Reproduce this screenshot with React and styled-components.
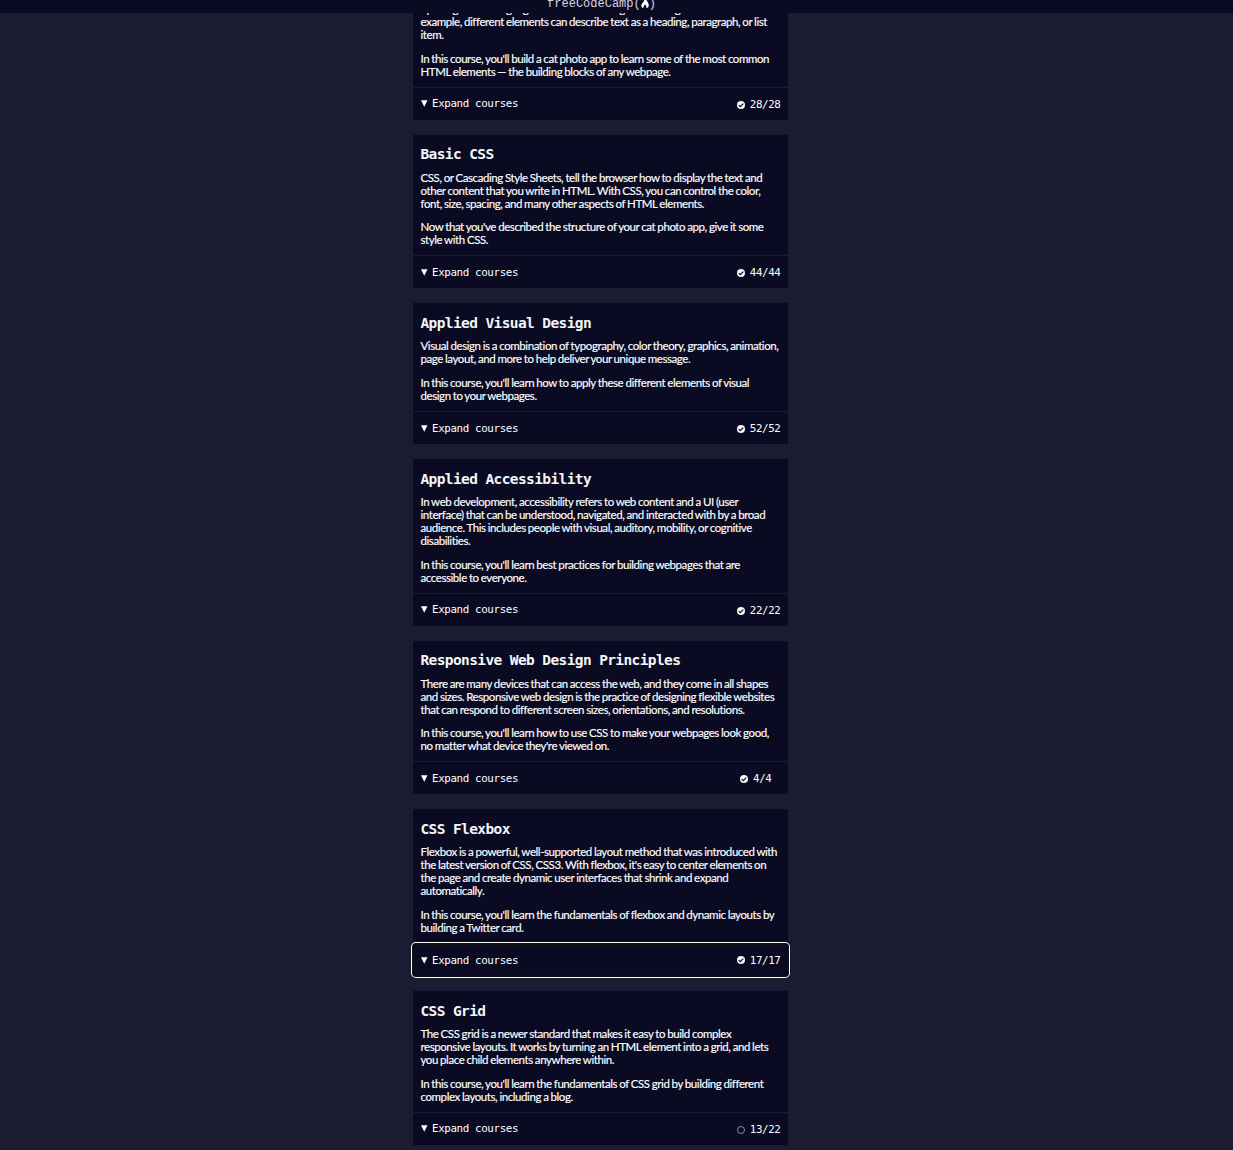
import React from "react";
import styled, { createGlobalStyle } from "styled-components";

const GlobalStyle = createGlobalStyle`
  * { box-sizing: border-box; }
  html, body { margin: 0; background: #1b1b32; }
  body { height: 1150px; overflow: hidden; }
`;

const mono = `"DejaVu Sans Mono", "Liberation Mono", monospace`;

const Header = styled.header`
  position: fixed;
  inset: 0 0 auto 0;
  z-index: 2;
  height: 13px;
  padding-right: 30px;
  display: flex;
  justify-content: center;
  align-items: flex-end;
  overflow: hidden;
  background: #0a0a23;
`;

const Logo = styled.div`
  flex: none;
  display: flex;
  align-items: center;
  height: 18px;
  font: 12px/18px "Liberation Mono", monospace;
  color: #d6d6e4;
`;

const Flame = styled.svg`
  display: block;
  width: 8px;
  height: 10px;
  margin-bottom: 3px;
`;

const Map = styled.main`
  width: 375px;
  margin-left: 413px;
  display: flex;
  flex-direction: column;
  gap: 15px;
`;

const Card = styled.section`
  background: #0a0a23;
  color: #f5f6f7;
`;

const Intro = styled.div`
  padding: ${(p) => (p.$cut ? "2px" : p.$tight ? "10px" : "11px")} 7.5px 9px;
`;

const Title = styled.h3`
  margin: 0 0 ${(p) => (p.$tight ? "8px" : "7px")};
  font: bold 14.5px/18px ${mono};
  letter-spacing: -0.61px;
  white-space: nowrap;
`;

const Text = styled.p`
  margin: 0;
  font: 11.5px/13px Lato, sans-serif;
  letter-spacing: -0.42px;
  word-spacing: -0.4px;
  color: #ffffff;
  -webkit-text-stroke: 0.15px #ffffff;
  white-space: nowrap;
  &:not(:first-of-type) { margin-top: ${(p) => (p.$tight ? "10px" : "11px")}; }
`;

const Line = styled.span`
  display: block;
`;

const Toggle = styled.button`
  display: flex;
  align-items: center;
  width: 100%;
  height: 33px;
  padding: 2px 7.5px 0 8px;
  border: 0;
  border-top: 1px solid #1b1b32;
  background: #0a0a23;
  color: #ffffff;
  font: 10.8px/14px ${mono};
  letter-spacing: -0.35px;
  outline: none;
  ${(p) =>
    p.$focused &&
    `height: 32px;
     margin-top: 1px;
     padding-top: 0;
     border-top-color: #101010;
     box-shadow: inset 0 0 0 1px #101010, 0 0 0 1px #101010, 0 0 0 2px #ffffff;
     border-radius: 3px;`}
`;

const Label = styled.span`
  padding-bottom: ${(p) => (p.$raised ? "2px" : "0")};
  display: flex;
  align-items: center;
  gap: 4.5px;
`;

const Caret = styled.svg`
  width: 6.5px;
  height: 7px;
  margin-bottom: 1px;
`;

const Count = styled.span`
  display: flex;
  align-items: center;
  gap: 5px;
  margin-left: auto;
  padding-right: ${(p) => (p.$short ? "9px" : "0")};
`;

const Status = styled.svg`
  display: block;
  width: 8px;
  height: 8px;
  margin-bottom: 1px;
`;

const StatusIcon = ({ done }) => (
  <Status viewBox="0 0 16 16">
    {done ? (
      <>
        <circle cx="8" cy="8" r="8" fill="#f5f6f7" />
        <path d="M3.5 8.200l3 3 6-6" fill="none" stroke="#0a0a23" strokeWidth="2.400" />
      </>
    ) : (
      <circle cx="8" cy="8" r="7" fill="none" stroke="#a5a5b5" strokeWidth="1.7" />
    )}
  </Status>
);

const courses = [
  {
    paragraphs: [
      ["opening and closing tags that surround and give meaning to content. For", "example, different elements can describe text as a heading, paragraph, or list", "item."],
      ["In this course, you'll build a cat photo app to learn some of the most common", "HTML elements — the building blocks of any webpage."],
    ],
    count: "28/28", done: true, raised: true,
  },
  {
    title: "Basic CSS",
    paragraphs: [
      ["CSS, or Cascading Style Sheets, tell the browser how to display the text and", "other content that you write in HTML. With CSS, you can control the color,", "font, size, spacing, and many other aspects of HTML elements."],
      ["Now that you've described the structure of your cat photo app, give it some", "style with CSS."],
    ],
    count: "44/44", done: true, tight: true,
  },
  {
    title: "Applied Visual Design",
    paragraphs: [
      ["Visual design is a combination of typography, color theory, graphics, animation,", "page layout, and more to help deliver your unique message."],
      ["In this course, you'll learn how to apply these different elements of visual", "design to your webpages."],
    ],
    count: "52/52", done: true,
  },
  {
    title: "Applied Accessibility",
    paragraphs: [
      ["In web development, accessibility refers to web content and a UI (user", "interface) that can be understood, navigated, and interacted with by a broad", "audience. This includes people with visual, auditory, mobility, or cognitive", "disabilities."],
      ["In this course, you'll learn best practices for building webpages that are", "accessible to everyone."],
    ],
    count: "22/22", done: true, raised: true,
  },
  {
    title: "Responsive Web Design Principles",
    paragraphs: [
      ["There are many devices that can access the web, and they come in all shapes", "and sizes. Responsive web design is the practice of designing flexible websites", "that can respond to different screen sizes, orientations, and resolutions."],
      ["In this course, you'll learn how to use CSS to make your webpages look good,", "no matter what device they're viewed on."],
    ],
    count: "4/4", done: true, tight: true,
  },
  {
    title: "CSS Flexbox",
    paragraphs: [
      ["Flexbox is a powerful, well-supported layout method that was introduced with", "the latest version of CSS, CSS3. With flexbox, it's easy to center elements on", "the page and create dynamic user interfaces that shrink and expand", "automatically."],
      ["In this course, you'll learn the fundamentals of flexbox and dynamic layouts by", "building a Twitter card."],
    ],
    count: "17/17", done: true, focused: true,
  },
  {
    title: "CSS Grid",
    paragraphs: [
      ["The CSS grid is a newer standard that makes it easy to build complex", "responsive layouts. It works by turning an HTML element into a grid, and lets", "you place child elements anywhere within."],
      ["In this course, you'll learn the fundamentals of CSS grid by building different", "complex layouts, including a blog."],
    ],
    count: "13/22", done: false, raised: true,
  },
];

const Course = ({ title, paragraphs, count, done, focused, tight, raised }) => (
  <Card>
    <Intro $cut={!title} $tight={tight}>
      {title && <Title $tight={tight}>{title}</Title>}
      {paragraphs.map((lines) => (
        <Text key={lines[0]} $tight={tight}>
          {lines.map((line) => (
            <Line key={line}>{line}</Line>
          ))}
        </Text>
      ))}
    </Intro>
    <Toggle $focused={focused}>
      <Label $raised={raised}>
        <Caret viewBox="0 0 6 7" preserveAspectRatio="none"><path d="M0 .3h6L3 6.700z" fill="#fff" /></Caret>
        Expand courses
      </Label>
      <Count $short={count.length < 5}>
        <StatusIcon done={done} />
        {count}
      </Count>
    </Toggle>
  </Card>
);

export default function App() {
  return (
    <>
      <GlobalStyle />
      <Header>
        <Logo>
          freeCodeCamp(
          <Flame viewBox="0 0 8 10">
            <path d="M3.300 0C5.500 2 7.800 4.800 7.800 7.400c0 1.100-.6 2-1.700 2.500-.5 0-.9-.2-.7-.8.2-1.100-.3-2-1.300-2.700C3.300 7.200 2.500 8 2.600 9.200c0 .5-.3.7-.8.7C.8 9.400.3 8.500.3 7.500c0-2.400 3.600-3.300 3-7.500z" fill="#fff" />
          </Flame>
          )
        </Logo>
      </Header>
      <Map>
        {courses.map((course) => (
          <Course key={course.count} {...course} />
        ))}
      </Map>
    </>
  );
}
